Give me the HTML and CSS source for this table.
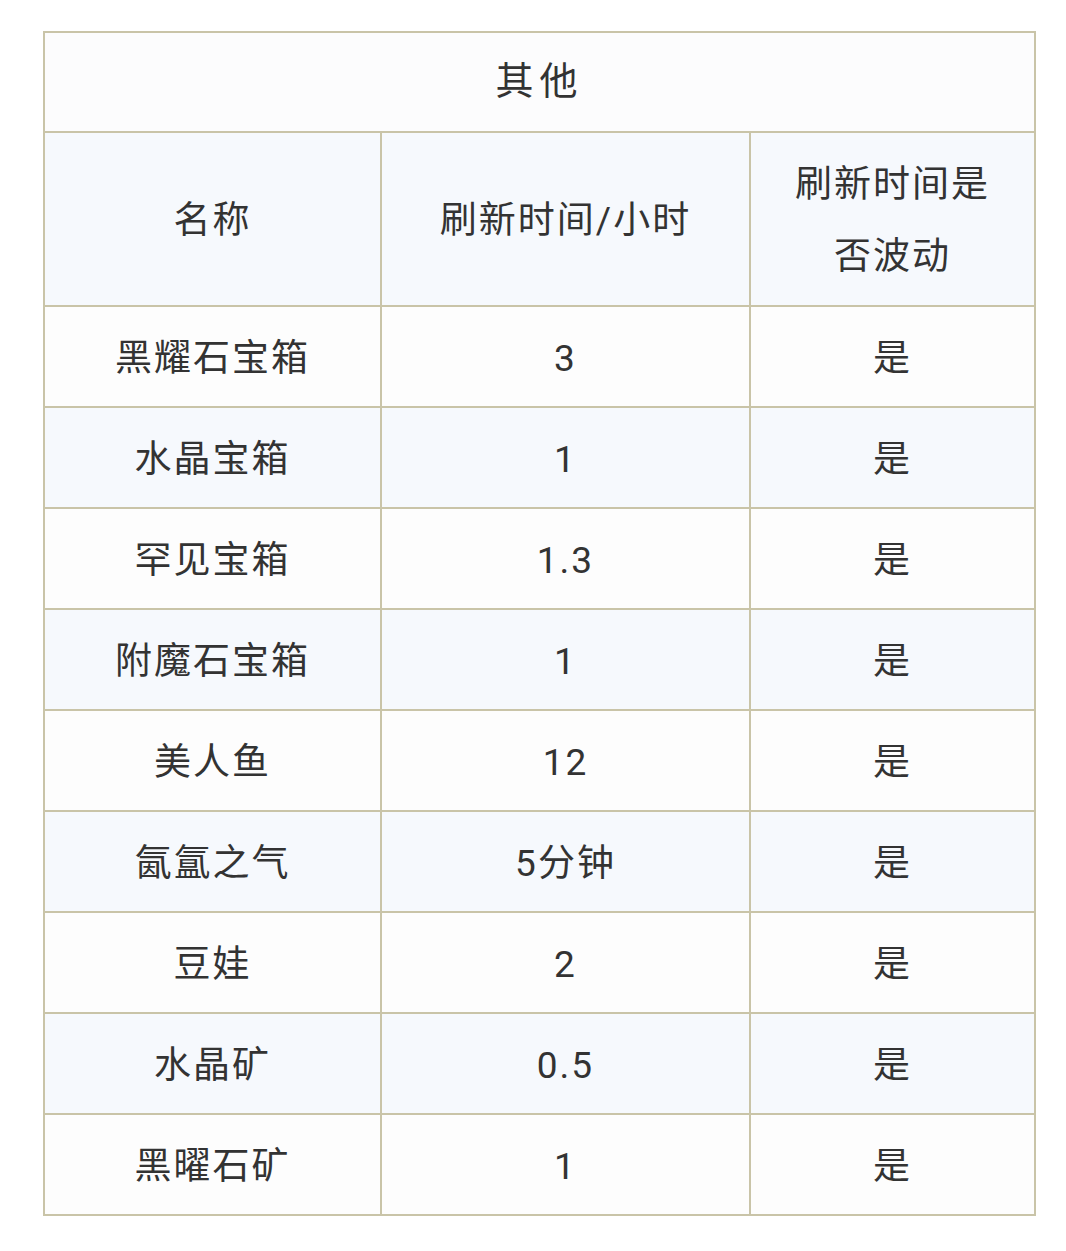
FILE: index.html
```html
<!DOCTYPE html>
<html lang="zh-CN">
<head>
<meta charset="utf-8">
<link rel="stylesheet" href="styles.css">
</head>
<body>
<table class="tbl">
  <colgroup>
    <col class="c1"><col class="c2"><col class="c3">
  </colgroup>
  <thead>
    <tr><th class="title" colspan="3">其他</th></tr>
    <tr class="head">
      <th>名称</th>
      <th>刷新时间/小时</th>
      <th>刷新时间是<br>否波动</th>
    </tr>
  </thead>
  <tbody>
    <tr><td>黑耀石宝箱</td><td>3</td><td>是</td></tr>
    <tr class="alt"><td>水晶宝箱</td><td>1</td><td>是</td></tr>
    <tr><td>罕见宝箱</td><td>1.3</td><td>是</td></tr>
    <tr class="alt"><td>附魔石宝箱</td><td>1</td><td>是</td></tr>
    <tr><td>美人鱼</td><td>12</td><td>是</td></tr>
    <tr class="alt"><td>氤氲之气</td><td>5分钟</td><td>是</td></tr>
    <tr><td>豆娃</td><td>2</td><td>是</td></tr>
    <tr class="alt"><td>水晶矿</td><td>0.5</td><td>是</td></tr>
    <tr><td>黑曜石矿</td><td>1</td><td>是</td></tr>
  </tbody>
</table>
</body>
</html>
```
FILE: styles.css
```css
html, body {
  margin: 0;
  padding: 0;
  background: #ffffff;
}
body {
  padding: 31px 0 0 43px;
  font-family: Roboto, "Noto Sans CJK SC", sans-serif;
  color: #333333;
}
.tbl {
  border-collapse: collapse;
  width: 991px;
  table-layout: fixed;
}
.c1 { width: 337px; }
.c2 { width: 369px; }
.c3 { width: 285px; }
.tbl th, .tbl td {
  border: 2px solid #c9c4a8;
  text-align: center;
  vertical-align: middle;
  font-size: 37px;
  font-weight: 400;
  line-height: 72px;
  letter-spacing: 2px;
  padding: 16px 8px 11px;
  background: #fdfdfd;
}
.tbl th.title {
  font-size: 38px;
  font-weight: 400;
  letter-spacing: 6px;
  padding: 12px 8px 14px;
  background: #fcfcfd;
}
.tbl .head th {
  background: #f6f9fd;
  padding: 16px 8px 12px;
}
.tbl .alt td {
  background: #f6f9fd;
}
```
